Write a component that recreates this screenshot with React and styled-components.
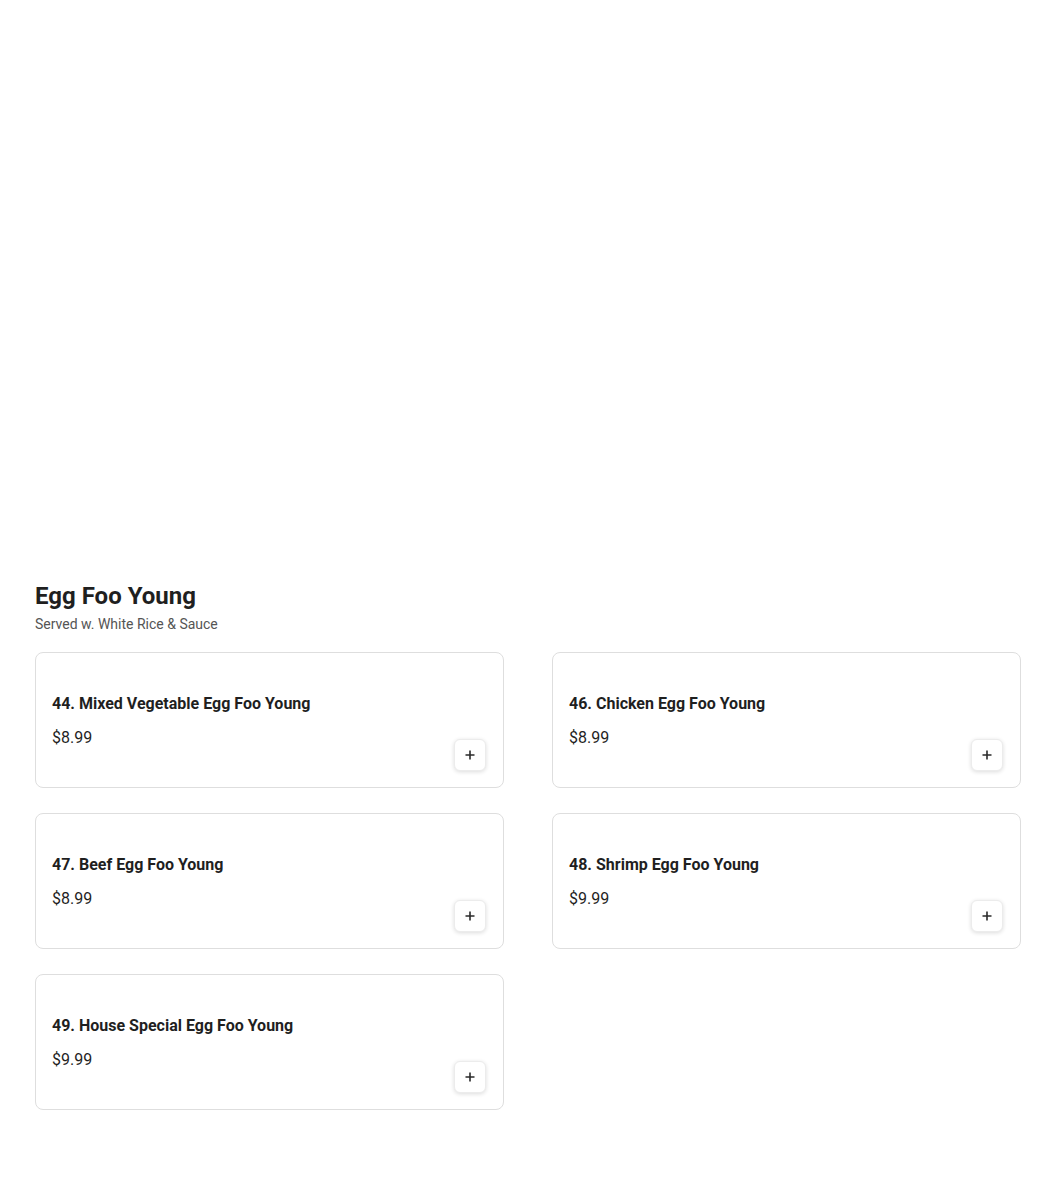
import React from 'react';
import styled, { createGlobalStyle } from 'styled-components';

const GlobalStyle = createGlobalStyle`
    body {
        margin: 0;
        background: #fff;
        font-family: Roboto, "Liberation Sans", sans-serif;
        color: #1f1f1f;
    }
`;

const Page = styled.div`
    padding: 580px 29px 60px 35px;
`;

const Title = styled.h2`
    margin: 0;
    font-size: 24px;
    line-height: 32px;
    font-weight: 700;
    color: #1f1f1f;
`;

const Subtitle = styled.p`
    margin: 2px 0 0;
    font-size: 14px;
    line-height: 20px;
    color: #555;
`;

const Grid = styled.div`
    display: grid;
    grid-template-columns: 1fr 1fr;
    column-gap: 48px;
    row-gap: 25px;
    margin-top: 18px;
`;

const Card = styled.div`
    display: flex;
    justify-content: space-between;
    border: 1px solid #dedede;
    border-radius: 8px;
    padding: 16px;
    background: #fff;
`;

const Info = styled.div`
    padding: 23px 0 21px;
    display: flex;
    flex-direction: column;
    gap: 10px;
`;

const ItemName = styled.div`
    font-size: 16px;
    line-height: 24px;
    font-weight: 700;
    color: #1f1f1f;
`;

const Price = styled.div`
    font-size: 16px;
    line-height: 24px;
    color: #1f1f1f;
`;

const AddButton = styled.button`
    align-self: flex-end;
    width: 32px;
    height: 32px;
    margin-right: 1px;
    padding: 0;
    display: flex;
    align-items: center;
    justify-content: center;
    border: 1px solid #ececec;
    border-radius: 6px;
    background: #fff;
    box-shadow: 0 1px 4px rgba(0, 0, 0, 0.14);
    cursor: pointer;
`;

const items = [
    { name: '44. Mixed Vegetable Egg Foo Young', price: '$8.99' },
    { name: '46. Chicken Egg Foo Young', price: '$8.99' },
    { name: '47. Beef Egg Foo Young', price: '$8.99' },
    { name: '48. Shrimp Egg Foo Young', price: '$9.99' },
    { name: '49. House Special Egg Foo Young', price: '$9.99' },
];

const PlusIcon = () => (
    <svg width="12" height="12" viewBox="0 0 12 12">
        <path d="M6 1.5v9M1.5 6h9" stroke="#2a2a2a" strokeWidth="1.6" />
    </svg>
);

const App = () => {
    return (
        <>
            <GlobalStyle />
            <Page>
                <Title>Egg Foo Young</Title>
                <Subtitle>Served w. White Rice &amp; Sauce</Subtitle>
                <Grid>
                    {items.map((item) => (
                        <Card key={item.name}>
                            <Info>
                                <ItemName>{item.name}</ItemName>
                                <Price>{item.price}</Price>
                            </Info>
                            <AddButton aria-label="Add">
                                <PlusIcon />
                            </AddButton>
                        </Card>
                    ))}
                </Grid>
            </Page>
        </>
    );
};

export default App;
